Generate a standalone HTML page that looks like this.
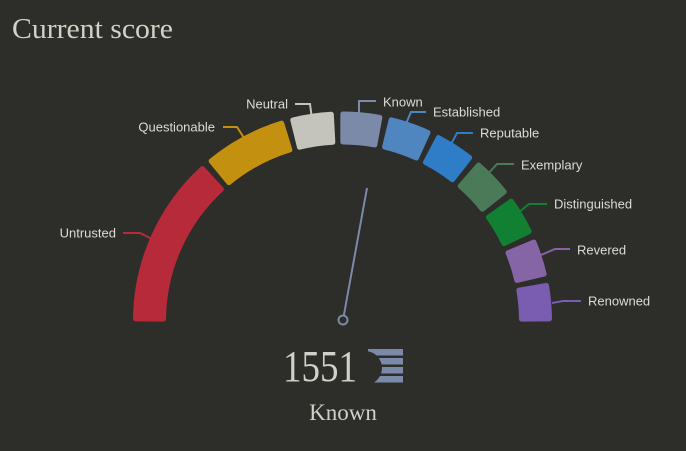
<!DOCTYPE html>
<html><head><meta charset="utf-8"><style>
html,body{margin:0;padding:0;background:#2d2d2a;width:686px;height:451px;overflow:hidden}
svg{display:block}
.l{font-family:"Liberation Sans",sans-serif;font-size:13px;fill:#dcdcd4;dominant-baseline:central}
.s{font-family:"Liberation Serif",serif;fill:#cfd2c6}
</style></head><body>
<svg id="g" width="686" height="451" viewBox="0 0 686 451">
<text x="12" y="38" class="s" font-size="28" textLength="161" lengthAdjust="spacingAndGlyphs">Current score</text>
</svg>
<script>
var svg=document.getElementById('g');
var cx=342.5,cy=321,Ro=207,Ri=179;
function pt(a,r){var t=a*Math.PI/180;return [cx-r*Math.cos(t),cy-r*Math.sin(t)];}
var segs=[[0,48,'#b72a3a'],[50,73.5,'#c4900f'],[75.5,87.5,'#c4c4bc'],[89.5,101,'#7a8aa8'],[103,115,'#4f86c0'],[117,128.5,'#2f7cc7'],[130.5,142,'#4a7a58'],[144,155,'#128032'],[157,167.5,'#8565a5'],[169.5,180,'#7a5cb0']];
var h='';
segs.forEach(function(s){var a=s[0]+0.6,b=s[1]-0.6;var p1=pt(a,Ro),p2=pt(b,Ro),p3=pt(b,Ri),p4=pt(a,Ri);
var d='M'+p1+' A'+Ro+' '+Ro+' 0 0 1 '+p2+' L'+p3+' A'+Ri+' '+Ri+' 0 0 0 '+p4+' Z';
h+='<path d="'+d+'" fill="'+s[2]+'" stroke="'+s[2]+'" stroke-width="5" stroke-linejoin="round"/>';});
var labs=[['Untrusted',116,233,'end','123,233 140,233 152,239','#b72a3a'],
['Questionable',215,127,'end','223,127 237,127 246,141','#c4900f'],
['Neutral',288,104,'end','295,104 310,104 312,119','#c4c4bc'],
['Known',383,102,'start','376,101 359,101 359,118','#7a8aa8'],
['Established',433,112,'start','426,112 411,112 405,126','#4f86c0'],
['Reputable',480,133,'start','473,133 457,133 450,146','#2f7cc7'],
['Exemplary',521,165,'start','514,164 497,164 486,176','#4a7a58'],
['Distinguished',554,204,'start','547,204 529,204 518,213','#128032'],
['Revered',577,250,'start','570,249 555,249 541,255','#8565a5'],
['Renowned',588,301,'start','581,301 563,301 552,303','#7a5cb0']];
labs.forEach(function(l){h+='<polyline points="'+l[4]+'" fill="none" stroke="'+l[5]+'" stroke-width="2"/>';
h+='<text class="l" x="'+l[1]+'" y="'+l[2]+'" text-anchor="'+l[3]+'">'+l[0]+'</text>';});
h+='<line x1="343" y1="320" x2="367" y2="188" stroke="#7a8aa8" stroke-width="2"/>';
h+='<circle cx="343" cy="320" r="4.5" fill="#2d2d2a" stroke="#7a8aa8" stroke-width="2"/>';
for(var i=0;i<4;i++){h+='<rect x="368" y="'+(349+i*9)+'" width="35" height="6.5" fill="#7a8aa8"/>';}
h+='<circle cx="365" cy="368" r="17" fill="#2d2d2a"/>';
h+='<text x="283" y="381" class="s" font-size="44" textLength="74" lengthAdjust="spacingAndGlyphs">1551</text>';
h+='<text x="343" y="420" class="s" font-size="23" text-anchor="middle">Known</text>';
svg.insertAdjacentHTML('beforeend',h);
</script>
</body></html>
